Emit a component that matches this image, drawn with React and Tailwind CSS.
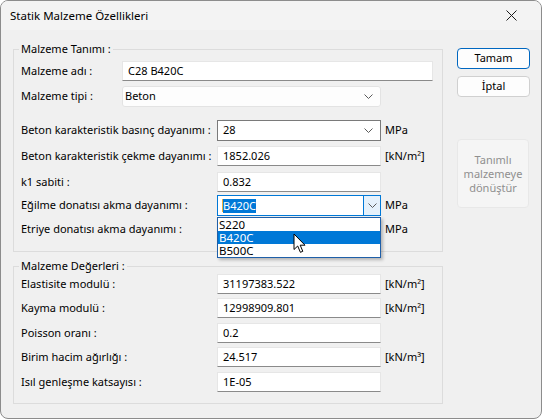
import { useState } from 'react';

const FONT = "font-['Segoe_UI','Noto_Sans',sans-serif]";

function Chevron() {
  return (
    <svg width="9" height="5" viewBox="0 0 9 5">
      <path d="M0.5 0.5 L4.5 4.5 L8.5 0.5" fill="none" stroke="#5a5a5a" strokeWidth="1" />
    </svg>
  );
}

function TextBox({ value, w = 'w-[164px]' }) {
  return (
    <div className={`${w} h-[20px] shrink-0 bg-white border border-[#e6e6e6] border-b-[#8a8a8a] pl-[5px] flex items-center text-black`}>
      {value}
    </div>
  );
}

function Combo({ value, dark = false }) {
  return (
    <div className={`w-[164px] h-[21px] shrink-0 bg-white border ${dark ? 'border-[#7a7a7a]' : 'border-[#e0e0e0]'} pl-[5px] pr-[7px] flex items-center justify-between`}>
      <span>{value}</span>
      <Chevron />
    </div>
  );
}

function Row({ label, mt, labelW = 'w-[196px]', children }) {
  return (
    <div className={`flex items-center ${mt}`}>
      <div className={`${labelW} shrink-0 whitespace-nowrap text-black`}>{label}</div>
      {children}
    </div>
  );
}

function Unit({ children }) {
  return <span className="ml-[4px] whitespace-nowrap text-black">{children}</span>;
}

function Group({ title, h, children }) {
  return (
    <div className={`relative w-[430px] ${h} border border-[#dcdcdc] pl-[7px]`}>
      <span className="absolute -top-[9px] left-[5px] px-[2px] bg-[#f0f0f0] leading-[16px] text-black whitespace-nowrap">
        {title}
      </span>
      {children}
    </div>
  );
}

export default function App() {
  const [items] = useState(['S220', 'B420C', 'B500C']);

  return (
    <div className={`w-[542px] h-[419px] bg-white text-[11px] ${FONT}`}>
      <div className="relative w-[542px] h-[419px] border border-[#8c8c8c] rounded-[8px] overflow-hidden bg-[#f0f0f0] flex flex-col">
        {/* title bar */}
        <div className="h-[29px] shrink-0 bg-[#f3f3f3] flex items-center justify-between pl-[9px] pr-[24px]">
          <span className="text-[11.5px] text-black">Statik Malzeme Özellikleri</span>
          <svg width="11" height="11" viewBox="0 0 11 11">
            <path d="M0.5 0.5 L10.5 10.5 M10.5 0.5 L0.5 10.5" stroke="#1a1a1a" strokeWidth="1" />
          </svg>
        </div>

        {/* body */}
        <div className="flex pl-[12px]">
          <div className="flex flex-col pt-[19px]">
            <Group title="Malzeme Tanımı :" h="h-[203px]">
              <Row label="Malzeme adı :" mt="mt-[11px]" labelW="w-[101px]">
                <TextBox value="C28 B420C" w="w-[311px]" />
              </Row>
              <Row label="Malzeme tipi :" mt="mt-[5px]" labelW="w-[101px]">
                <div className="w-[259px] h-[21px] bg-[#fdfdfd] border border-[#e3e3e3] rounded-[3px] pl-[2px] pr-[7px] flex items-center justify-between">
                  <span>Beton</span>
                  <Chevron />
                </div>
              </Row>
              <Row label="Beton karakteristik basınç dayanımı :" mt="mt-[13px]">
                <Combo value="28" dark />
                <Unit>MPa</Unit>
              </Row>
              <Row label="Beton karakteristik çekme dayanımı :" mt="mt-[5px]">
                <TextBox value="1852.026" />
                <Unit>[kN/m²]</Unit>
              </Row>
              <Row label="k1 sabiti :" mt="mt-[6px]">
                <TextBox value="0.832" />
              </Row>
              <Row label="Eğilme donatısı akma dayanımı :" mt="mt-[3px]">
                <div className="relative w-[164px] h-[21px] shrink-0 bg-white border border-[#0078d7] flex items-center">
                  <span className="ml-[4px] w-[1px] h-[13px] bg-[#f0b040]" />
                  <span className="bg-[#0078d7] text-white leading-[14px]">B420C</span>
                  <div className="ml-auto w-[17px] h-full bg-[#e5f1fb] border-l border-[#0078d7] flex items-center justify-center">
                    <Chevron />
                  </div>
                  {/* open dropdown list */}
                  <div className="absolute left-[-1px] top-[21px] z-10 w-[164px] bg-white border border-[#1f5fa8] shadow-[2px_2px_3px_rgba(0,0,0,0.25)]">
                    {items.map((it) => (
                      <div
                        key={it}
                        className={`h-[13px] leading-[13px] pl-[1px] text-[11.5px] ${it === 'B420C' ? 'bg-[#0078d7] text-white' : 'text-black'}`}
                      >
                        {it}
                      </div>
                    ))}
                  </div>
                </div>
                <Unit>MPa</Unit>
              </Row>
              <Row label="Etriye donatısı akma dayanımı :" mt="mt-[3px]">
                {/* covered by the open list above */}
                <Combo value="" dark />
                <Unit>MPa</Unit>
              </Row>
            </Group>

            <div className="mt-[14px]">
              <Group title="Malzeme Değerleri :" h="h-[138px]">
                <Row label="Elastisite modulü :" mt="mt-[7px]">
                  <TextBox value="31197383.522" />
                  <Unit>[kN/m²]</Unit>
                </Row>
                <Row label="Kayma modulü :" mt="mt-[4px]">
                  <TextBox value="12998909.801" />
                  <Unit>[kN/m²]</Unit>
                </Row>
                <Row label="Poisson oranı :" mt="mt-[5px]">
                  <TextBox value="0.2" />
                </Row>
                <Row label="Birim hacim ağırlığı :" mt="mt-[4px]">
                  <TextBox value="24.517" />
                  <Unit>[kN/m³]</Unit>
                </Row>
                <Row label="Isıl genleşme katsayısı :" mt="mt-[5px]">
                  <TextBox value="1E-05" />
                </Row>
              </Group>
            </div>
          </div>

          {/* buttons */}
          <div className="ml-[14px] pt-[18px] flex flex-col">
            <button type="button" className="w-[73px] h-[21px] bg-[#fdfdfd] border border-[#0067c0] rounded-[4px] text-black">
              Tamam
            </button>
            <button type="button" className="mt-[7px] w-[73px] h-[21px] bg-[#fdfdfd] border border-[#d0d0d0] rounded-[4px] text-black">
              İptal
            </button>
            <button type="button" disabled className="mt-[42px] w-[72px] h-[69px] bg-[#f5f5f5] border border-[#e8e8e8] rounded-[4px] leading-[14px] text-[#8f8f8f] px-[4px]">
              Tanımlı malzemeye dönüştür
            </button>
          </div>
        </div>

        {/* mouse cursor */}
        <svg className="absolute left-[292px] top-[232px] z-20" width="14" height="21" viewBox="0 0 14 21">
          <path d="M1 1 L1 16.5 L4.7 13 L7.4 19.3 L9.8 18.3 L7.2 12.2 L12 12.2 Z" fill="white" stroke="black" strokeWidth="1" strokeLinejoin="round" />
        </svg>
      </div>
    </div>
  );
}
